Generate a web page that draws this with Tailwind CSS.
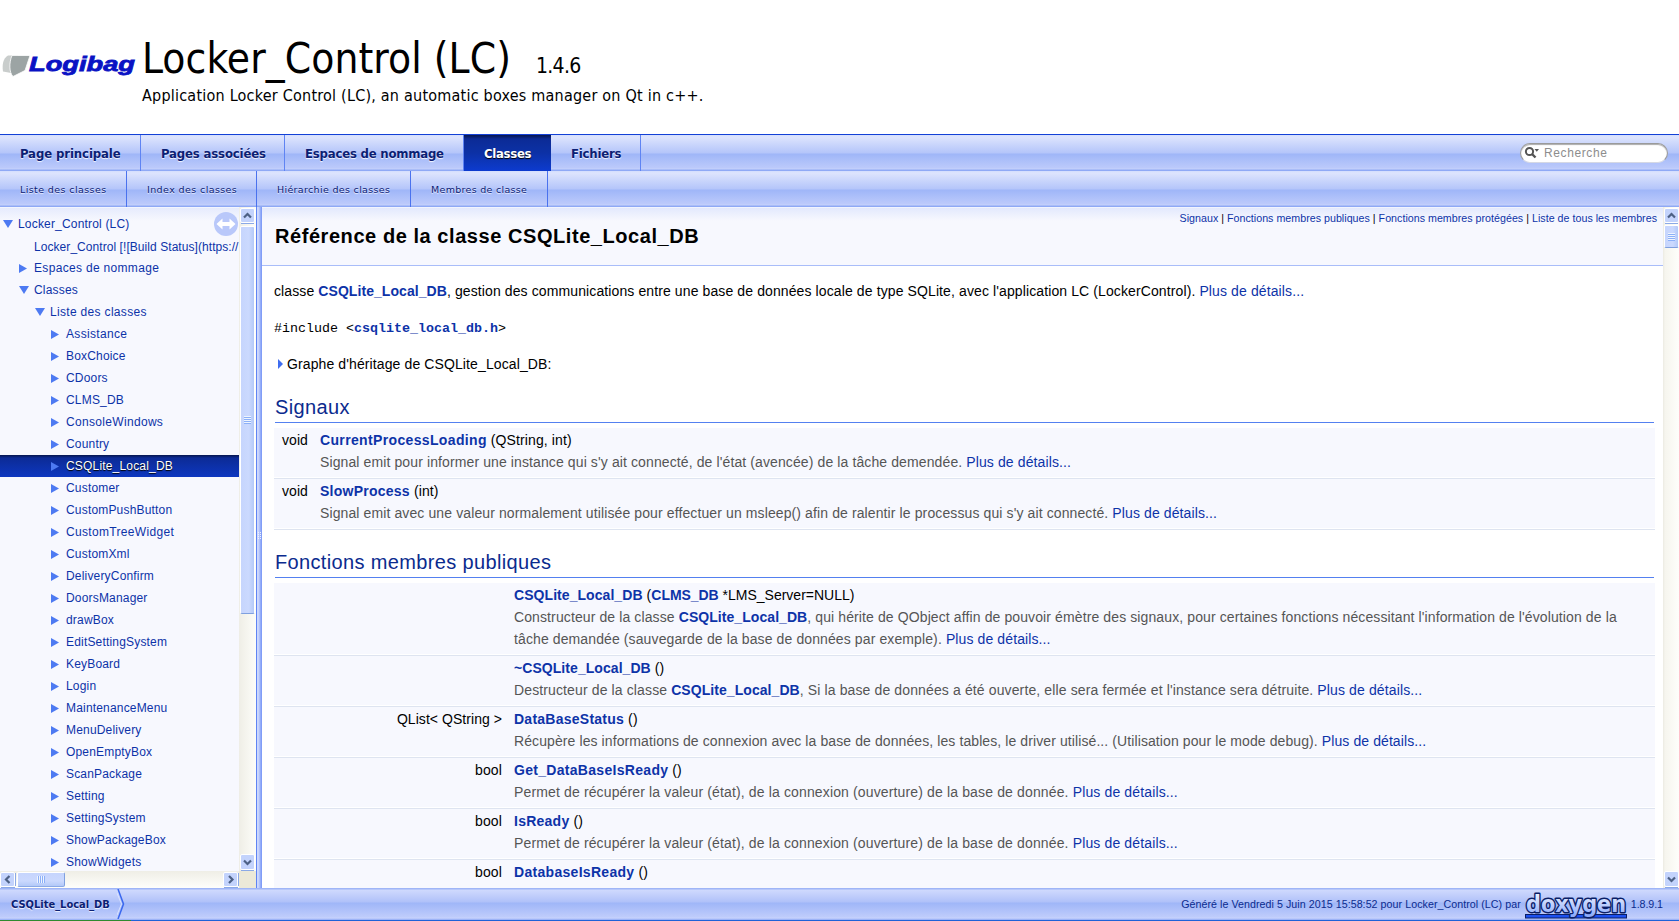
<!DOCTYPE html>
<html lang="fr">
<head>
<meta charset="utf-8">
<title>Locker_Control (LC): Référence de la classe CSQLite_Local_DB</title>
<script src="https://cdn.jsdelivr.net/npm/@tailwindcss/browser@4"></script>
</head>
<body class="flex h-[921px] w-[1679px] flex-col overflow-hidden bg-white font-['Liberation_Sans',Arial,sans-serif] whitespace-nowrap text-black">

<!-- Project header -->
<header class="flex h-[134px] shrink-0">
  <svg class="mt-[50px] h-[32px] w-[142px] shrink-0" viewBox="0 0 142 32">
    <path d="M8 5.500h10l-7 17.500-8-1.500c-1-7 0-13 5-16z" fill="#c9cdcc"/>
    <path d="M12 5.500h18l-5 15-12 6c-4-4-4-14-1-21z" fill="#9ca4a4" stroke="#fff" stroke-width=".8"/>
    <text x="29" y="20.500" textLength="106" lengthAdjust="spacingAndGlyphs" font-family="Liberation Sans, sans-serif" font-weight="bold" font-style="italic" font-size="20.500" fill="#0a12c4" stroke="#0a12c4" stroke-width=".8">Logibag</text>
  </svg>
  <div class="pt-[38px] font-['DejaVu_Sans_Condensed','DejaVu_Sans',sans-serif]">
    <div class="flex items-baseline leading-[42px]">
      <h1 class="text-[42px] tracking-[0.07px]">Locker_Control (LC)</h1>
      <span class="ml-[25px] text-[21px] tracking-[-0.7px]">1.4.6</span>
    </div>
    <p class="mt-[-3px] text-[16px] leading-6 tracking-[0.22px]">Application Locker Control (LC), an automatic boxes manager on Qt in c++.</p>
  </div>
</header>

<!-- Main tabs -->
<nav class="flex h-[37px] shrink-0 border-t border-[#1341d6] bg-[linear-gradient(#d4ddfd,#dde4fd_2px,#b4c5fa_18px,#9fb6f8_19px,#bccafb_33px,#c6d2fb_34px,#8fa9f5_35px)] font-['DejaVu_Sans_Condensed','DejaVu_Sans',sans-serif] text-[13px] leading-[37px] font-bold tracking-[-0.1px] text-[#0b2073] [text-shadow:0_1px_1px_#ffffffe6]">
  <a class="w-[141px] border-r border-[#5f84f3] pl-5">Page principale</a>
  <a class="w-[144px] border-r border-[#5f84f3] pl-5 tracking-[-0.15px]">Pages associées</a>
  <a class="w-[179px] border-r border-[#5f84f3] pl-5 tracking-[-0.2px]">Espaces de nommage</a>
  <a class="w-[87px] bg-[linear-gradient(#06164e,#0c2b96_4px,#0c31a6_18px,#0d3bcf)] pl-5 tracking-[-0.3px] text-white [text-shadow:0_1px_1px_#000000]">Classes</a>
  <a class="w-[90px] border-r border-[#5f84f3] pl-5 tracking-[-0.2px]">Fichiers</a>
  <div class="mt-[8px] mr-[11px] ml-auto flex h-5 w-[148px] items-center rounded-full border border-[#9a9a9a] border-b-[#d5d8e4] bg-white pl-[3px] shadow-[inset_0_1px_1px_#00000055] [text-shadow:none]">
    <svg class="h-[14px] w-[18px]" viewBox="0 0 18 14"><circle cx="5.5" cy="5.5" r="3.6" fill="none" stroke="#555" stroke-width="2"/><path d="M8 8l3.500 3.500" stroke="#555" stroke-width="2.400"/><path d="M10.500 3h4.500l-2.250 2.700z" fill="#555"/></svg>
    <span class="ml-[2px] pt-px font-['Liberation_Sans',Arial,sans-serif] text-[12px] font-normal tracking-[0.6px] text-[#8d8d8d]">Recherche</span>
  </div>
</nav>

<!-- Sub tabs -->
<nav class="flex h-9 shrink-0 bg-[linear-gradient(#d4ddfd,#dde4fd_2px,#b4c5fa_18px,#9fb6f8_19px,#bccafb_33px,#c6d2fb_34px,#8fa9f5_35px)] font-['DejaVu_Sans',sans-serif] text-[9.5px] leading-[37px] tracking-[0.4px] text-[#0b2073] [text-shadow:0_1px_1px_#ffffffe6]">
  <a class="w-[127px] border-r border-[#4a72ee] pl-5">Liste des classes</a>
  <a class="w-[130px] border-r border-[#4a72ee] pl-5">Index des classes</a>
  <a class="w-[154px] border-r border-[#4a72ee] pl-5 tracking-[0.33px]">Hiérarchie des classes</a>
  <a class="w-[137px] border-r border-[#4a72ee] pl-5 tracking-[0.3px]">Membres de classe</a>
</nav>

<main class="flex h-[681px] shrink-0">
  <!-- Navigation tree -->
  <aside class="w-[256px] shrink-0">
    <div class="flex h-[664px]">
      <div class="relative w-[239px] overflow-hidden bg-[linear-gradient(#ffffff,#e6ebfd_1px,#f7f8fe_14px)]">
        <ul id="tree" class="pt-[6px] text-[12px] leading-[22px] text-[#0d33a8]"></ul>
        <svg class="absolute top-[5px] left-[214px] h-6 w-6" viewBox="0 0 24 24"><circle cx="12" cy="12" r="12" fill="#b9c8fa"/><path d="M2.500 12l6-5.500v3.500h7V6.500l6 5.500-6 5.500V14h-7v3.500z" fill="#fff"/></svg>
      </div>
      <div class="flex w-[17px] flex-col bg-[linear-gradient(90deg,#efeee6,#fdfdf9)] px-px pt-px">
        <svg class="h-4 w-[15px] shrink-0" viewBox="0 0 15 16"><rect x=".5" y=".5" width="14" height="14" rx="1.500" fill="#c3d3fc" stroke="#fff"/><path d="M1 15.500h13" stroke="#8ba9e6"/><path d="M4 9.500l3.500-3.500 3.500 3.500" fill="none" stroke="#4d6185" stroke-width="2.200"/></svg>
        <div class="mt-[2px] flex h-[388px] w-[15px] shrink-0 items-center justify-center rounded-[2px] border border-white border-b-[#7fa0df] bg-[linear-gradient(90deg,#c6d5fd,#cbd9fe_60%,#b3c9f8)]">
          <div class="h-[8px] w-[7px] bg-[repeating-linear-gradient(#eef4fe_0_1px,#8cb0f8_1px_2px)]"></div>
        </div>
        <svg class="mt-auto h-[17px] w-[15px] shrink-0" viewBox="0 0 15 17"><rect x=".5" y=".5" width="14" height="15" rx="1.500" fill="#c3d3fc" stroke="#fff"/><path d="M1 16.500h13" stroke="#8ba9e6"/><path d="M4 6.500l3.500 3.500 3.500-3.500" fill="none" stroke="#4d6185" stroke-width="2.200"/></svg>
      </div>
    </div>
    <div class="flex h-[17px]">
      <div class="flex w-[239px] bg-[linear-gradient(#efeee6,#fefefb)] pt-px">
        <svg class="h-4 w-4 shrink-0" viewBox="0 0 16 16"><rect x=".5" y=".5" width="14" height="14" rx="1.500" fill="#c3d3fc" stroke="#fff"/><path d="M15.500 1v13M1 15.500h14" stroke="#8ba9e6"/><path d="M9.500 4L6 7.500 9.500 11" fill="none" stroke="#4d6185" stroke-width="2.200"/></svg>
        <div class="ml-[1px] flex h-[15px] w-12 items-center justify-center rounded-[2px] border border-white border-r-[#7fa0df] border-b-[#8ba9e6] bg-[linear-gradient(#c6d5fd,#cbd9fe_60%,#b3c9f8)]">
          <div class="h-[7px] w-[8px] bg-[repeating-linear-gradient(90deg,#eef4fe_0_1px,#8cb0f8_1px_2px)]"></div>
        </div>
        <svg class="ml-auto h-4 w-4 shrink-0" viewBox="0 0 16 16"><rect x=".5" y=".5" width="14" height="14" rx="1.500" fill="#c3d3fc" stroke="#fff"/><path d="M15.500 1v13M1 15.500h14" stroke="#8ba9e6"/><path d="M6 4l3.500 3.500L6 11" fill="none" stroke="#4d6185" stroke-width="2.200"/></svg>
      </div>
      <div class="w-[17px] bg-[#ece9d8]"></div>
    </div>
  </aside>

  <!-- Splitter -->
  <div class="flex w-[6px] shrink-0 items-center bg-[linear-gradient(90deg,#5f84f3_0_1px,#cdd8fd_1px_2px,#c0cefc_3px,#9fb5f9_4px,#7695f6)]">
    <svg class="mt-[-23px] ml-[2px] h-2 w-1" viewBox="0 0 4 8"><path d="M0 .5h4M0 2.500h4M0 4.500h4M0 6.500h4" stroke="#eef2ff" stroke-dasharray="1 1"/></svg>
  </div>

  <!-- Class reference -->
  <section class="w-[1401px] overflow-hidden bg-white">
    <div class="flex h-[59px] justify-between border-b border-[#a9bdf9] bg-[linear-gradient(#ffffff,#e3e9fd_1px,#f7f8fe_14px)] pr-[6px] pl-[13px]">
      <h1 class="pt-[18px] text-[20px] leading-[22px] font-bold tracking-[0.56px]">Référence de la classe CSQLite_Local_DB</h1>
      <p class="text-[10.67px] leading-[23px] tracking-[0.025px]"><a class="text-[#0d33a8]">Signaux</a> | <a class="text-[#0d33a8]">Fonctions membres publiques</a> | <a class="text-[#0d33a8]">Fonctions membres protégées</a> | <a class="text-[#0d33a8]">Liste de tous les membres</a></p>
    </div>
    <div class="px-3 pr-2 text-[14px] leading-[22px] tracking-[0.11px]">
      <p class="pt-[14px]">classe <a class="font-bold tracking-[0.06px] text-[#0d33a8]">CSQLite_Local_DB</a>, gestion des communications entre une base de données locale de type SQLite, avec l'application LC (LockerControl). <a class="text-[#0d33a8]">Plus de détails...</a></p>
      <p class="mt-4 font-['Liberation_Mono',monospace] text-[13.33px] tracking-normal">#include &lt;<a class="font-bold text-[#0d33a8]">csqlite_local_db.h</a>&gt;</p>
      <p class="mt-[13px] flex items-center"><svg class="mr-[4px] ml-[4px] h-[10px] w-[5px]" viewBox="0 0 5 10"><path d="M0 0l5 5-5 5z" fill="#3f6df0"/></svg>Graphe d'héritage de CSQLite_Local_DB:</p>

      <h2 class="mt-[21px] mr-px ml-px border-b border-[#5480f0] pb-1 text-[20px] leading-[22px] tracking-[0.35px] text-[#0b2b8e]">Signaux</h2>
      <div class="mt-[5px]">
        <div class="flex border-b border-[#dee4f0] bg-[linear-gradient(#f7f8fe_calc(100%-1px),#ffffff_0)] pt-px pb-[5px]">
          <div class="w-[46px] pr-3 text-right">void</div>
          <div><p><a class="font-bold tracking-[0.35px] text-[#0d33a8]">CurrentProcessLoading</a> (QString, int)</p><p class="text-[#555]">Signal emit pour informer une instance qui s'y ait connecté, de l'état (avencée) de la tâche demendée. <a class="text-[#0d33a8]">Plus de détails...</a></p></div>
        </div>
        <div class="flex border-b border-[#dee4f0] bg-[linear-gradient(#f7f8fe_calc(100%-1px),#ffffff_0)] pt-px pb-[5px]">
          <div class="w-[46px] pr-3 text-right">void</div>
          <div><p><a class="font-bold tracking-[0.25px] text-[#0d33a8]">SlowProcess</a> (int)</p><p class="text-[#555]">Signal emit avec une valeur normalement utilisée pour effectuer un msleep() afin de ralentir le processus qui s'y ait connecté. <a class="text-[#0d33a8]">Plus de détails...</a></p></div>
        </div>
      </div>

      <h2 class="mt-[21px] mr-px ml-px border-b border-[#5480f0] pb-1 text-[20px] leading-[22px] tracking-[0.35px] text-[#0b2b8e]">Fonctions membres publiques</h2>
      <div class="mt-[5px]">
        <div class="flex border-b border-[#dee4f0] bg-[linear-gradient(#f7f8fe_calc(100%-1px),#ffffff_0)] pt-px pb-[5px]">
          <div class="w-[240px] pr-3 text-right"></div>
          <div><p><a class="font-bold tracking-[0.06px] text-[#0d33a8]">CSQLite_Local_DB</a> (<a class="font-bold tracking-[-0.05px] text-[#0d33a8]">CLMS_DB</a><span class="tracking-normal"> *LMS_Server=NULL)</span></p><p class="text-[#555]">Constructeur de la classe <a class="font-bold tracking-[0.06px] text-[#0d33a8]">CSQLite_Local_DB</a>, qui hérite de QObject affin de pouvoir émètre des signaux, pour certaines fonctions nécessitant l'information de l'évolution de la<br>tâche demandée (sauvegarde de la base de données par exemple). <a class="text-[#0d33a8]">Plus de détails...</a></p></div>
        </div>
        <div class="flex border-b border-[#dee4f0] bg-[linear-gradient(#f7f8fe_calc(100%-1px),#ffffff_0)] pt-px pb-[5px]">
          <div class="w-[240px] pr-3 text-right"></div>
          <div><p><a class="font-bold tracking-[0.06px] text-[#0d33a8]">~CSQLite_Local_DB</a> ()</p><p class="tracking-[0.125px] text-[#555]">Destructeur de la classe <a class="font-bold tracking-[0.06px] text-[#0d33a8]">CSQLite_Local_DB</a>, Si la base de données a été ouverte, elle sera fermée et l'instance sera détruite. <a class="text-[#0d33a8]">Plus de détails...</a></p></div>
        </div>
        <div class="flex border-b border-[#dee4f0] bg-[linear-gradient(#f7f8fe_calc(100%-1px),#ffffff_0)] pt-px pb-[5px]">
          <div class="w-[240px] pr-3 text-right tracking-[0.05px]">QList&lt; QString &gt;</div>
          <div><p><a class="font-bold tracking-[0.25px] text-[#0d33a8]">DataBaseStatus</a> ()</p><p class="tracking-[0.095px] text-[#555]">Récupère les informations de connexion avec la base de données, les tables, le driver utilisé... (Utilisation pour le mode debug). <a class="text-[#0d33a8]">Plus de détails...</a></p></div>
        </div>
        <div class="flex border-b border-[#dee4f0] bg-[linear-gradient(#f7f8fe_calc(100%-1px),#ffffff_0)] pt-px pb-[5px]">
          <div class="w-[240px] pr-3 text-right">bool</div>
          <div><p><a class="font-bold tracking-[0.3px] text-[#0d33a8]">Get_DataBaseIsReady</a> ()</p><p class="tracking-[0.14px] text-[#555]">Permet de récupérer la valeur (état), de la connexion (ouverture) de la base de donnée. <a class="text-[#0d33a8]">Plus de détails...</a></p></div>
        </div>
        <div class="flex border-b border-[#dee4f0] bg-[linear-gradient(#f7f8fe_calc(100%-1px),#ffffff_0)] pt-px pb-[5px]">
          <div class="w-[240px] pr-3 text-right">bool</div>
          <div><p><a class="font-bold tracking-[0.25px] text-[#0d33a8]">IsReady</a> ()</p><p class="tracking-[0.14px] text-[#555]">Permet de récupérer la valeur (état), de la connexion (ouverture) de la base de donnée. <a class="text-[#0d33a8]">Plus de détails...</a></p></div>
        </div>
        <div class="flex h-[51px] bg-[#f7f8fe] pt-px">
          <div class="w-[240px] pr-3 text-right">bool</div>
          <div><a class="font-bold tracking-[0.3px] text-[#0d33a8]">DatabaseIsReady</a> ()</div>
        </div>
      </div>
    </div>
  </section>

  <!-- Document scrollbar -->
  <div class="flex w-4 shrink-0 flex-col bg-[linear-gradient(90deg,#ebeae2,#f6f5ee_2px,#fefefb)] pt-px pl-px">
    <svg class="h-4 w-[15px] shrink-0" viewBox="0 0 15 16"><rect x=".5" y=".5" width="14" height="14" rx="1.500" fill="#c3d3fc" stroke="#fff"/><path d="M1 15.500h13" stroke="#8ba9e6"/><path d="M4 9.500l3.500-3.500 3.500 3.500" fill="none" stroke="#4d6185" stroke-width="2.200"/></svg>
    <div class="mt-px flex h-[23px] w-[15px] shrink-0 items-center justify-center rounded-[2px] border border-white border-b-[#7fa0df] bg-[linear-gradient(90deg,#c6d5fd,#cbd9fe_60%,#b3c9f8)]">
      <div class="h-[8px] w-[7px] bg-[repeating-linear-gradient(#eef4fe_0_1px,#8cb0f8_1px_2px)]"></div>
    </div>
    <svg class="mt-auto h-[17px] w-[15px] shrink-0" viewBox="0 0 15 17"><rect x=".5" y=".5" width="14" height="15" rx="1.500" fill="#c3d3fc" stroke="#fff"/><path d="M1 16.500h13" stroke="#8ba9e6"/><path d="M4 6.500l3.500 3.500 3.500-3.500" fill="none" stroke="#4d6185" stroke-width="2.200"/></svg>
  </div>
</main>

<!-- Breadcrumb footer -->
<footer class="flex h-8 shrink-0 items-center bg-[linear-gradient(#9fb5f7_0_1px,#cfd9fd_2px,#b0c1f9_14px,#9fb6f8_15px,#bfccfb_29px,#c8d3fc_30px,#8fa9f5)]">
  <span class="pt-[2px] pl-[11px] font-['DejaVu_Sans_Condensed','DejaVu_Sans',sans-serif] text-[11px] font-bold text-[#0b2073] [text-shadow:0_1px_1px_#ffffffe6]">CSQLite_Local_DB</span>
  <svg class="ml-[7px] h-[30px] w-2" viewBox="0 0 8 30"><path d="M1 0l5.500 15L1 30" fill="none" stroke="#3a68ee" stroke-width="1.500"/><path d="M0 4l4.500 11L0 26" fill="none" stroke="#d9e2fe"/></svg>
  <span class="ml-auto text-[10.67px] tracking-[0.055px] text-[#0b2b8e]">Généré le Vendredi 5 Juin 2015 15:58:52 pour Locker_Control (LC) par</span>
  <svg class="ml-[3px] h-8 w-[106px]" viewBox="0 0 106 32">
    <defs><linearGradient id="dx" x1="0" y1="0" x2="0" y2="1"><stop offset="0" stop-color="#ffffff"/><stop offset="1" stop-color="#86a6fb"/></linearGradient></defs>
    <rect x="1.500" y="26.500" width="101" height="3.500" fill="#1c50f0" stroke="#0a1e66"/>
    <text x="2" y="23.500" textLength="100" lengthAdjust="spacingAndGlyphs" font-family="DejaVu Sans Condensed, DejaVu Sans, sans-serif" font-weight="bold" font-size="23.500" fill="url(#dx)" stroke="#0a1e66" stroke-width="2.800" stroke-linejoin="round" paint-order="stroke">doxygen</text>
  </svg>
  <span class="mr-4 ml-[1px] text-[10.67px] tracking-[-0.05px] text-[#0b2b8e]">1.8.9.1</span>
</footer>
<div class="flex h-px shrink-0 bg-[#1f62d8]"><div class="w-[131px] bg-[#2f8a2f]"></div></div>

<script>
const down = '<svg class="h-[8px] w-[10px]" viewBox="0 0 10 8"><path d="M0 0h10L5 8z" fill="#4d7af2"/></svg>';
const right = '<svg class="h-[9px] w-[8px]" viewBox="0 0 8 9"><path d="M0 0l8 4.500L0 9z" fill="#4d7af2"/></svg>';
const rows = [[0, down, 'Locker_Control (LC)'], [1, '', 'Locker_Control [![Build Status](https://'], [1, right, 'Espaces de nommage'], [1, down, 'Classes'], [2, down, 'Liste des classes']];
'Assistance BoxChoice CDoors CLMS_DB ConsoleWindows Country CSQLite_Local_DB Customer CustomPushButton CustomTreeWidget CustomXml DeliveryConfirm DoorsManager drawBox EditSettingSystem KeyBoard Login MaintenanceMenu MenuDelivery OpenEmptyBox ScanPackage Setting SettingSystem ShowPackageBox ShowWidgets'.split(' ').forEach(n => rows.push([3, right, n]));
const wide = ['Espaces de nommage', 'Liste des classes', 'ConsoleWindows', 'CustomTreeWidget', 'Assistance'];
document.getElementById('tree').innerHTML = rows.map(([level, icon, name]) => {
  const selected = name === 'CSQLite_Local_DB' ? ' bg-[linear-gradient(#06164e,#0c2b96_3px,#0d37c0)] text-white [text-shadow:0_1px_1px_#000000]' : '';
  const tracking = name.includes('https') ? ' pt-[2px] tracking-[0.06px]' : wide.includes(name) ? ' tracking-[0.32px]' : ' tracking-[0.18px]';
  return `<li class="flex h-[22px] items-center${selected}${tracking}" style="padding-left:${3 + level * 16}px"><span class="mr-[2px] flex w-[13px] shrink-0">${icon}</span>${name}</li>`;
}).join('');
</script>
</body>
</html>
